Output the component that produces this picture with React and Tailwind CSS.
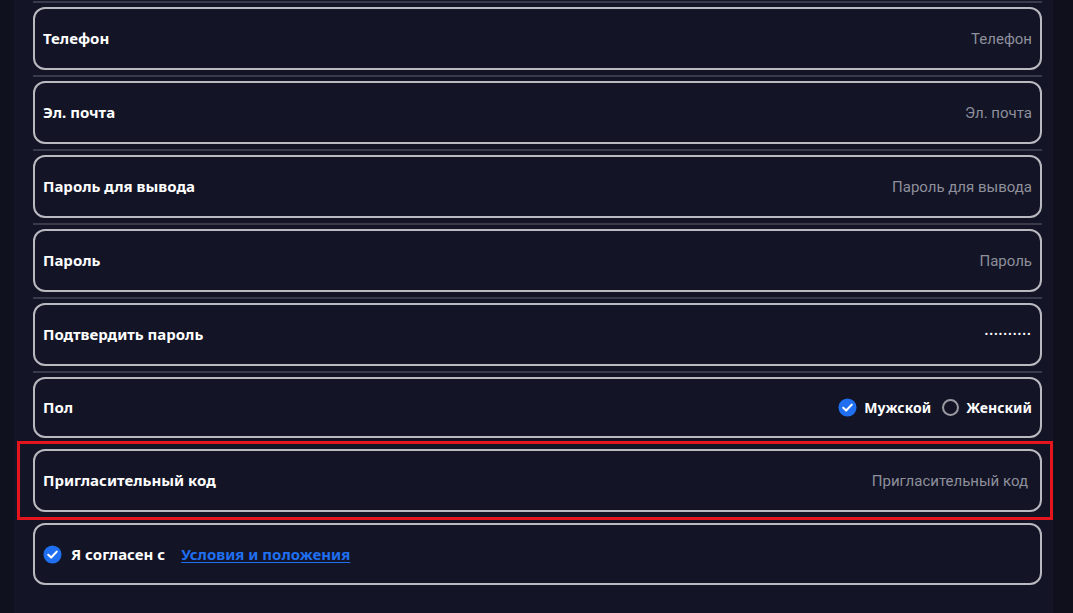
import React from "react";

const font = { fontFamily: "Roboto, 'Noto Sans', Arial, sans-serif" };
const bold = { fontFamily: "'Noto Sans', Roboto, Arial, sans-serif" };

function Sep() {
  return <div className="h-[2px] bg-[#3a3b4a] ml-[19px] mr-[11px]" />;
}

function Card({ h = "h-[63px]", children, pr = "pr-[8px]" }) {
  return (
    <div className={`ml-[19px] mr-[11px] ${h} rounded-[12px] border-2 border-[#b9b9c0] flex items-center justify-between pl-[8px] ${pr}`}>
      {children}
    </div>
  );
}

function Label({ children }) {
  return <span style={bold} className="text-white font-bold text-[15px]">{children}</span>;
}

function Ph({ children }) {
  return <span className="text-[#8e909b] text-[15px] pt-[2px]">{children}</span>;
}

function CheckCircle() {
  return (
    <svg width="19" height="19" viewBox="0 0 20 20">
      <circle cx="10" cy="10" r="9.5" fill="#1f6ff0" />
      <path d="M5.5 10.3 L8.6 13.2 L14.5 7" stroke="white" strokeWidth="2.2" fill="none" strokeLinecap="round" strokeLinejoin="round" />
    </svg>
  );
}

export default function App() {
  const fields = [
    ["Телефон", "Телефон"],
    ["Эл. почта", "Эл. почта"],
    ["Пароль для вывода", "Пароль для вывода"],
    ["Пароль", "Пароль"],
  ];
  return (
    <div style={font} className="w-[1073px] h-[613px] bg-[#0f101c] flex overflow-hidden">
      <div className="w-[14px] bg-[#10111e]" />
      <div className="w-[1039px] bg-[#131426] pt-[1px]">
        {fields.map(([l, p]) => (
          <div key={l}>
            <Sep />
            <div className="pt-[4px] pb-[5px]">
              <Card>
                <Label>{l}</Label>
                <Ph>{p}</Ph>
              </Card>
            </div>
          </div>
        ))}
        <Sep />
        <div className="pt-[4px] pb-[5px]">
          <Card>
            <Label>Подтвердить пароль</Label>
            <span className="text-white text-[9px] font-bold tracking-[1.5px] leading-none">••••••••••</span>
          </Card>
        </div>
        <Sep />
        <div className="pt-[4px]">
          <Card h="h-[61px]">
            <Label>Пол</Label>
            <div className="flex items-center">
              <CheckCircle />
              <span style={bold} className="ml-[7px] text-white font-bold text-[14px]">Мужской</span>
              <span className="ml-[11px] w-[17px] h-[17px] rounded-full border-2 border-[#9a9aa2]" />
              <span style={bold} className="ml-[7px] text-white font-bold text-[14px]">Женский</span>
            </div>
          </Card>
        </div>
        <div className="relative mt-[11px]">
          <Card pr="pr-[12px]">
            <Label>Пригласительный код</Label>
            <Ph>Пригласительный код</Ph>
          </Card>
          <div className="absolute left-[3px] right-[0px] top-[-8px] bottom-[-8px] border-[3px] border-[#e5151e] pointer-events-none" />
        </div>
        <div className="mt-[11px]">
          <Card h="h-[62px]">
            <div className="flex items-center">
              <CheckCircle />
              <span style={bold} className="ml-[9px] text-white font-bold text-[15px]">Я согласен с</span>
              <span style={bold} className="ml-[16px] text-[#1f6ff0] font-bold text-[15px] underline underline-offset-2">Условия и положения</span>
            </div>
          </Card>
        </div>
      </div>
      <div className="flex-1 bg-[#0f101c]" />
    </div>
  );
}
